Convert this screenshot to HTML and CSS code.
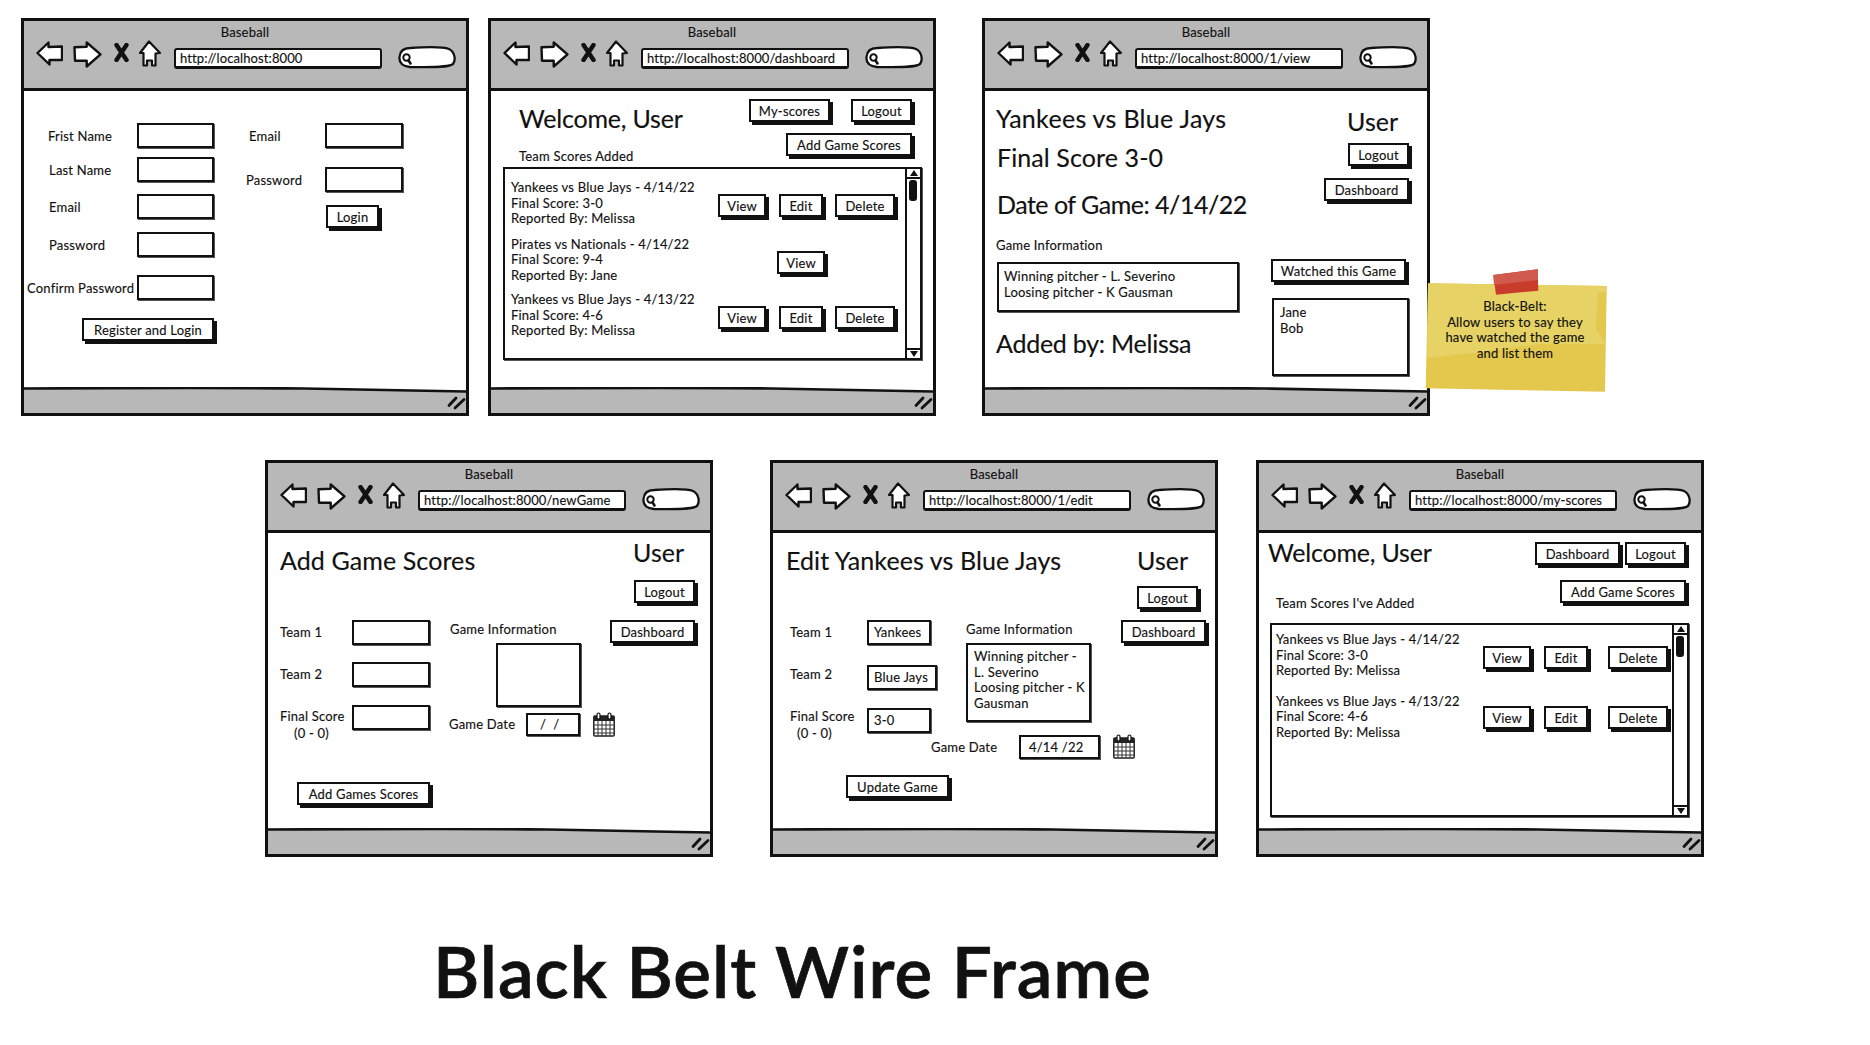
FILE: index.html
```html
<!DOCTYPE html>
<html lang="en">
<head>
<meta charset="utf-8">
<title>Black Belt Wire Frame</title>
<link rel="stylesheet" href="styles.css">
</head>
<body>
<svg class="defs" width="0" height="0" aria-hidden="true">
  <symbol id="i-back" viewBox="0 0 27 25"><path d="M1.5 12 12.5 1.5V6L26 5.5 26 19 13.5 19V23.5Z" fill="#fff" stroke="#111" stroke-width="2.4" stroke-linejoin="round"/></symbol>
  <symbol id="i-forward" viewBox="0 0 29 27"><path d="M1.5 6.3 13.7 5.7V1.5L27.5 13.3 13.7 25.5V19.7L2 19.7Z" fill="#fff" stroke="#111" stroke-width="2.4" stroke-linejoin="round"/></symbol>
  <symbol id="i-close" viewBox="0 0 15 19"><path d="M2.5 2 12.5 17M12.5 2 2.5 17" fill="none" stroke="#111" stroke-width="4.4" stroke-linecap="round"/></symbol>
  <symbol id="i-home" viewBox="0 0 22 27"><path d="M10 1.5 1 13 4.5 13V25.5H8V20.5H13V25.5H16.5V13.5L21 13Z" fill="#fff" stroke="#111" stroke-width="2.2" stroke-linejoin="round"/></symbol>
  <symbol id="i-search" viewBox="0 0 59 23"><path d="M12 2C28 1 46 1 51 3 57 6 58 14 55 18 50 22 30 21 12 21 3 20 1 16 1.500 11 2 5 6 2 12 2Z" fill="#fff" stroke="#111" stroke-width="2.300"/><circle cx="8.500" cy="11.500" r="3.200" fill="#fff" stroke="#111" stroke-width="2"/><path d="M10.500 14.500 12.500 17.500" stroke="#111" stroke-width="2.600" stroke-linecap="round"/></symbol>
  <symbol id="i-foot" viewBox="0 0 442 26"><path d="M0 1.500C90 1 200 .5 280 1.500 340 2.500 400 3.500 442 4.500V26H0Z" fill="#b8b8b8"/><path d="M0 1.500C90 1 200 .5 280 1.500 340 2.500 400 3.500 442 4.500" fill="none" stroke="#111" stroke-width="2.600"/><path d="M425 18.500 432 11M431 21 440 12.500" fill="none" stroke="#111" stroke-width="2.800" stroke-linecap="round"/></symbol>
  <symbol id="i-cal" viewBox="0 0 22 25"><rect x=".8" y="4" width="20.400" height="20" rx="1" fill="#fff" stroke="#222" stroke-width="1.500"/><rect x="1" y="4" width="20" height="5" fill="#222"/><path d="M1 13H21M1 17H21M1 21H21M5 9V24M9 9V24M13 9V24M17 9V24" fill="none" stroke="#333" stroke-width="1"/><rect x="4" y="1" width="3" height="6" rx="1.500" fill="#fff" stroke="#111" stroke-width="1.200"/><rect x="15" y="1" width="3" height="6" rx="1.500" fill="#fff" stroke="#111" stroke-width="1.200"/></symbol>
</svg>

<main class="canvas">

  <!-- 1. Register / login -->
  <section class="win win-1">
    <header class="chrome">
      <div class="chrome-title">Baseball</div>
      <div class="toolbar">
        <svg class="tb-back"><use href="#i-back"/></svg>
        <svg class="tb-forward"><use href="#i-forward"/></svg>
        <svg class="tb-close"><use href="#i-close"/></svg>
        <svg class="tb-home"><use href="#i-home"/></svg>
        <div class="url">http://localhost:8000</div>
        <svg class="tb-search"><use href="#i-search"/></svg>
      </div>
    </header>
    <div class="view cols">
      <div class="ml3 mt32 w187">
        <div class="row"><span class="lbl w110 pl21">Frist Name</span><span class="inp w77"></span></div>
        <div class="row mt9"><span class="lbl w110 pl22">Last Name</span><span class="inp w77"></span></div>
        <div class="row mt12"><span class="lbl w110 pl22">Email</span><span class="inp w77"></span></div>
        <div class="row mt13"><span class="lbl w110 pl22">Password</span><span class="inp w77"></span></div>
        <div class="row mt18"><span class="lbl w110">Confirm Password</span><span class="inp w77"></span></div>
        <div class="btn w132 mt18 ml55">Register and Login</div>
      </div>
      <div class="ml32 mt32">
        <div class="row"><span class="lbl w79 pl3">Email</span><span class="inp w78"></span></div>
        <div class="row mt19"><span class="lbl w79">Password</span><span class="inp w78"></span></div>
        <div class="btn w53 mt13 ml80">Login</div>
      </div>
    </div>
    <svg class="foot"><use href="#i-foot"/></svg>
  </section>

  <!-- 2. Dashboard -->
  <section class="win win-2">
    <header class="chrome">
      <div class="chrome-title">Baseball</div>
      <div class="toolbar">
        <svg class="tb-back"><use href="#i-back"/></svg>
        <svg class="tb-forward"><use href="#i-forward"/></svg>
        <svg class="tb-close"><use href="#i-close"/></svg>
        <svg class="tb-home"><use href="#i-home"/></svg>
        <div class="url">http://localhost:8000/dashboard</div>
        <svg class="tb-search"><use href="#i-search"/></svg>
      </div>
    </header>
    <div class="view">
      <div class="top h76">
        <div class="ml28">
          <h2 class="hd hd-tight mt13">Welcome, User</h2>
          <div class="lbl mt16">Team Scores Added</div>
        </div>
        <div class="actions mr21 mt8">
          <div class="row-auto gap21"><div class="btn w81">My-scores</div><div class="btn w61">Logout</div></div>
          <div class="btn w126 mt11">Add Game Scores</div>
        </div>
      </div>
      <div class="list ml12 h193">
        <div class="list-main pt11 pl6">
          <div class="item">
            <p class="item-text">Yankees vs Blue Jays - 4/14/22<br>Final Score: 3-0<br>Reported By: Melissa</p>
            <div class="item-btns mt14"><div class="btn w48">View</div><div class="btn w44 ml13">Edit</div><div class="btn w60 ml12">Delete</div></div>
          </div>
          <div class="item mt10">
            <p class="item-text">Pirates vs Nationals - 4/14/22<br>Final Score: 9-4<br>Reported By: Jane</p>
            <div class="item-btns mt14"><div class="btn w48 ml59">View</div></div>
          </div>
          <div class="item mt9">
            <p class="item-text">Yankees vs Blue Jays - 4/13/22<br>Final Score: 4-6<br>Reported By: Melissa</p>
            <div class="item-btns mt14"><div class="btn w48">View</div><div class="btn w44 ml13">Edit</div><div class="btn w60 ml12">Delete</div></div>
          </div>
        </div>
        <div class="scroll"><div class="sb-btn"><i class="tri-up"></i></div><div class="sb-track"><div class="sb-thumb"></div></div><div class="sb-btn sb-end"><i class="tri-down"></i></div></div>
      </div>
    </div>
    <svg class="foot"><use href="#i-foot"/></svg>
  </section>

  <!-- 3. View game -->
  <section class="win win-3">
    <header class="chrome">
      <div class="chrome-title">Baseball</div>
      <div class="toolbar">
        <svg class="tb-back"><use href="#i-back"/></svg>
        <svg class="tb-forward"><use href="#i-forward"/></svg>
        <svg class="tb-close"><use href="#i-close"/></svg>
        <svg class="tb-home"><use href="#i-home"/></svg>
        <div class="url">http://localhost:8000/1/view</div>
        <svg class="tb-search"><use href="#i-search"/></svg>
      </div>
    </header>
    <div class="view cols">
      <div class="ml11">
        <h2 class="hd hd-wide mt13">Yankees vs Blue Jays</h2>
        <div class="hd mt11 ml1">Final Score 3-0</div>
        <div class="hd hd-date mt19 ml1">Date of Game: 4/14/22</div>
        <div class="lbl mt19">Game Information</div>
        <div class="box w242 h50 mt9 ml1 pl5 pt5">Winning pitcher - L. Severino<br>Loosing pitcher - K Gausman</div>
        <div class="hd hd-narrow mt17">Added by: Melissa</div>
      </div>
      <div class="side w141 mr15">
        <div class="hd mt16 ml76">User</div>
        <div class="btn w61 mt8 self-end mr3">Logout</div>
        <div class="btn w85 mt12 self-end mr3">Dashboard</div>
        <div class="btn w135 mt58">Watched this Game</div>
        <div class="box w137 h78 mt16 ml1 pl6 pt5">Jane<br>Bob</div>
      </div>
    </div>
    <svg class="foot"><use href="#i-foot"/></svg>
  </section>

  <aside class="sticky">
    <svg class="sticky-art" viewBox="0 0 190 135" aria-hidden="true">
      <path d="M8 23.300 186.700 26 185 131.700 5.700 128.300Z" fill="#e4c84e"/>
      <path d="M8 23.300 186.700 26 186.500 32 178 33 176 70 186 84 120 84 60 92 7 98Z" fill="#e6d265"/>
      <path d="M73.300 15 117.700 9.300 118.300 30.700 76 34.700Z" fill="#c93b2a"/>
      <path d="M73.300 15 117.700 9.300 118 20 74 25Z" fill="#cf5a4d"/>
    </svg>
    <p class="sticky-text">Black-Belt:<br>Allow users to say they<br>have watched the game<br>and list them</p>
  </aside>

  <!-- 4. New game -->
  <section class="win win-low win-4">
    <header class="chrome">
      <div class="chrome-title">Baseball</div>
      <div class="toolbar">
        <svg class="tb-back"><use href="#i-back"/></svg>
        <svg class="tb-forward"><use href="#i-forward"/></svg>
        <svg class="tb-close"><use href="#i-close"/></svg>
        <svg class="tb-home"><use href="#i-home"/></svg>
        <div class="url">http://localhost:8000/newGame</div>
        <svg class="tb-search"><use href="#i-search"/></svg>
      </div>
    </header>
    <div class="view cols">
      <div class="ml12 w330">
        <h2 class="hd mt13">Add Game Scores</h2>
        <div class="cols mt46">
          <div class="w169">
            <div class="row-top"><span class="lbl w72 pt4">Team 1</span><span class="inp w78"></span></div>
            <div class="row-top mt17"><span class="lbl w72 pt4">Team 2</span><span class="inp w78"></span></div>
            <div class="row-top mt18"><span class="lbl w72 lh17 pt3">Final Score<span class="sub ml14">(0 - 0)</span></span><span class="inp w78"></span></div>
            <div class="btn w133 mt40 ml17">Add Games Scores</div>
          </div>
          <div>
            <div class="lbl mt1 ml1">Game Information</div>
            <div class="box w85 h64 mt6 ml47"></div>
            <div class="row-auto mt5">
              <span class="lbl lift2 w77">Game Date</span>
              <span class="inp date w54 pl12">/ &nbsp;/</span>
              <svg class="cal ml13"><use href="#i-cal"/></svg>
            </div>
          </div>
        </div>
      </div>
      <div class="side w88 mr12">
        <div class="hd mt5 ml23">User</div>
        <div class="btn w61 mt14 self-end mr3">Logout</div>
        <div class="btn w85 mt17">Dashboard</div>
      </div>
    </div>
    <svg class="foot"><use href="#i-foot"/></svg>
  </section>

  <!-- 5. Edit game -->
  <section class="win win-low win-5">
    <header class="chrome">
      <div class="chrome-title">Baseball</div>
      <div class="toolbar">
        <svg class="tb-back"><use href="#i-back"/></svg>
        <svg class="tb-forward"><use href="#i-forward"/></svg>
        <svg class="tb-close"><use href="#i-close"/></svg>
        <svg class="tb-home"><use href="#i-home"/></svg>
        <div class="url">http://localhost:8000/1/edit</div>
        <svg class="tb-search"><use href="#i-search"/></svg>
      </div>
    </header>
    <div class="view cols">
      <div class="ml13 w335">
        <h2 class="hd mt13">Edit Yankees vs Blue Jays</h2>
        <div class="cols mt46 ml4">
          <div class="w176">
            <div class="row-top"><span class="lbl w77 pt4">Team 1</span><span class="inp w64 val">Yankees</span></div>
            <div class="row-top mt20"><span class="lbl w77 pt1">Team 2</span><span class="inp w70 val">Blue Jays</span></div>
            <div class="row-top mt18"><span class="lbl w77 lh17">Final Score<span class="sub ml7">(0 - 0)</span></span><span class="inp w64 val">3-0</span></div>
            <div class="btn w103 mt33 ml56">Update Game</div>
          </div>
          <div>
            <div class="lbl mt1">Game Information</div>
            <div class="box w125 h79 mt6 pl6 pt4">Winning pitcher -<br>L. Severino<br>Loosing pitcher - K<br>Gausman</div>
            <div class="row-auto mt12 mln35">
              <span class="lbl w88">Game Date</span>
              <span class="inp date2 w81 pl8">4/14 /22</span>
              <svg class="cal ml13"><use href="#i-cal"/></svg>
            </div>
          </div>
        </div>
      </div>
      <div class="side w88 mr6">
        <div class="hd mt13 ml16">User</div>
        <div class="btn w61 mt12 ml16">Logout</div>
        <div class="btn w85 mt11">Dashboard</div>
      </div>
    </div>
    <svg class="foot"><use href="#i-foot"/></svg>
  </section>

  <!-- 6. My scores -->
  <section class="win win-low win-6">
    <header class="chrome">
      <div class="chrome-title">Baseball</div>
      <div class="toolbar">
        <svg class="tb-back"><use href="#i-back"/></svg>
        <svg class="tb-forward"><use href="#i-forward"/></svg>
        <svg class="tb-close"><use href="#i-close"/></svg>
        <svg class="tb-home"><use href="#i-home"/></svg>
        <div class="url">http://localhost:8000/my-scores</div>
        <svg class="tb-search"><use href="#i-search"/></svg>
      </div>
    </header>
    <div class="view">
      <div class="top h90">
        <div class="ml9">
          <h2 class="hd hd-tight mt5">Welcome, User</h2>
          <div class="lbl mt29 ml8">Team Scores I've Added</div>
        </div>
        <div class="actions mr15 mt9">
          <div class="row-auto gap5"><div class="btn w85">Dashboard</div><div class="btn w61">Logout</div></div>
          <div class="btn w126 mt15">Add Game Scores</div>
        </div>
      </div>
      <div class="list ml11 h194">
        <div class="list-main pt7 pl4">
          <div class="item">
            <p class="item-text">Yankees vs Blue Jays - 4/14/22<br>Final Score: 3-0<br>Reported By: Melissa</p>
            <div class="item-btns mt14"><div class="btn w48">View</div><div class="btn w44 ml13">Edit</div><div class="btn w60 ml20">Delete</div></div>
          </div>
          <div class="item mt15">
            <p class="item-text">Yankees vs Blue Jays - 4/13/22<br>Final Score: 4-6<br>Reported By: Melissa</p>
            <div class="item-btns mt12"><div class="btn w48">View</div><div class="btn w44 ml13">Edit</div><div class="btn w60 ml20">Delete</div></div>
          </div>
        </div>
        <div class="scroll"><div class="sb-btn"><i class="tri-up"></i></div><div class="sb-track"><div class="sb-thumb"></div></div><div class="sb-btn sb-end"><i class="tri-down"></i></div></div>
      </div>
    </div>
    <svg class="foot"><use href="#i-foot"/></svg>
  </section>

  <h1 class="page-title">Black Belt Wire Frame</h1>
</main>
</body>
</html>
```

FILE: styles.css
```css
* { box-sizing: border-box; }
html, body { margin: 0; padding: 0; background: #fff; }
body { font-family: Lato, "Noto Sans", sans-serif; font-size: 13px; letter-spacing: .2px; -webkit-text-stroke: .15px #111; color: #111; }
.defs { position: absolute; }
.canvas { position: relative; width: 1870px; height: 1045px; overflow: hidden; }

/* free-canvas windows */
.win { position: absolute; top: 18px; width: 448px; height: 398px; display: flex; flex-direction: column; border: 3px solid #111; background: #fff; }
.win-low { top: 460px; height: 397px; }
.win-1 { left: 21px; }
.win-2 { left: 488px; }
.win-3 { left: 982px; }
.win-4 { left: 265px; }
.win-5 { left: 770px; }
.win-6 { left: 1256px; }

/* browser chrome */
.chrome { flex: none; height: 70px; background: #b8b8b8; border-bottom: 3px solid #111; padding-top: 3px; }
.chrome-title { height: 16px; line-height: 16px; text-align: center; }
.toolbar { display: flex; align-items: flex-start; padding-left: 12px; margin-top: 1px; }
.tb-back { width: 27px; height: 25px; flex: none; }
.tb-forward { width: 29px; height: 27px; flex: none; margin-left: 10px; }
.tb-close { width: 15px; height: 19px; flex: none; margin: 2px 0 0 12px; }
.tb-home { width: 22px; height: 27px; flex: none; margin: -1px 0 0 10px; }
.url { width: 208px; height: 21px; flex: none; margin: 7px 0 0 13px; padding-left: 4px; line-height: 17px; letter-spacing: .1px; background: #fff; border: 2px solid #111; border-bottom-width: 3px; border-radius: 3px; white-space: nowrap; overflow: hidden; }
.tb-search { width: 59px; height: 23px; flex: none; margin: 5px 0 0 16px; }
.foot { flex: none; display: block; width: 442px; height: 26px; }
.view { flex: 1; min-height: 0; }

/* layout helpers */
.cols { display: flex; align-items: flex-start; }
.cols > * { flex: none; }
.top { display: flex; justify-content: space-between; align-items: flex-start; }
.actions { display: flex; flex-direction: column; align-items: flex-end; }
.cols > .side { margin-left: auto; display: flex; flex-direction: column; align-items: flex-start; }
.self-end { align-self: flex-end; }
.row { display: flex; align-items: center; height: 25px; }
.row-top { display: flex; align-items: flex-start; }
.row-auto { display: flex; align-items: center; }
.gap21 { gap: 21px; }
.gap5 { gap: 5px; }

/* text */
.hd { margin-bottom: 0; font-size: 25px; line-height: 28px; font-weight: 400; letter-spacing: .1px; white-space: nowrap; }
.hd-tight { letter-spacing: -.2px; }
.hd-wide { letter-spacing: .3px; }
.hd-narrow { letter-spacing: -.25px; }
.hd-date { letter-spacing: -.5px; }
h2.hd { margin-left: 0; margin-right: 0; }
.lbl { display: block; flex: none; line-height: 16px; white-space: nowrap; }
.lh17 { line-height: 17px; }
.lift2 { margin-top: -2px; }
.sub { display: block; }

/* controls */
.inp { display: block; flex: none; height: 25px; background: #fff; border: 2px solid #111; box-shadow: 1px 1px 0 #555; }
.val { padding-left: 5px; line-height: 21px; white-space: nowrap; }
.date { height: 23px; line-height: 19px; }
.date2 { height: 24px; line-height: 20px; }
.btn { flex: none; height: 23px; line-height: 21px; text-align: center; background: #fff; border: 2px solid #111; box-shadow: 3px 3px 0 #111; white-space: nowrap; }
.box { background: #fff; border: 2px solid #111; box-shadow: 1px 1px 0 #555; line-height: 15.5px; white-space: nowrap; }
.cal { flex: none; width: 22px; height: 25px; }

/* score lists */
.list { display: flex; width: 419px; background: #fff; border: 2px solid #111; box-shadow: 1px 1px 0 #555; }
.list-main { flex: 1; min-width: 0; }
.item { display: flex; align-items: flex-start; }
.item-text { flex: none; width: 207px; margin: 0; line-height: 15.5px; white-space: nowrap; }
.item-btns { display: flex; }
.scroll { flex: none; width: 15px; display: flex; flex-direction: column; border-left: 2px solid #111; }
.sb-btn { flex: none; height: 10px; display: flex; align-items: center; justify-content: center; border-bottom: 2px solid #111; }
.sb-end { border-bottom: 0; border-top: 2px solid #111; }
.sb-track { flex: 1; padding: 1px 0 0 2px; }
.sb-thumb { width: 8px; height: 21px; background: #111; border-radius: 3px; }
.tri-up { width: 0; height: 0; border: 4px solid transparent; border-top-width: 0; border-bottom: 6px solid #111; }
.tri-down { width: 0; height: 0; border: 4px solid transparent; border-bottom-width: 0; border-top: 6px solid #111; }

/* sticky note */
.sticky { position: absolute; left: 1420px; top: 260px; width: 190px; height: 135px; padding-top: 39px; }
.sticky-art { position: absolute; left: 0; top: 0; width: 190px; height: 135px; }
.sticky-text { position: relative; margin: 0; text-align: center; line-height: 15.5px; }

/* page title */
.page-title { position: absolute; left: 433px; top: 928px; margin: 0; font-size: 71px; line-height: 86px; font-weight: 600; letter-spacing: 1px; -webkit-text-stroke: .7px #111; white-space: nowrap; }

/* spacing + sizing */
.mt1{margin-top:1px}.mt5{margin-top:5px}.mt6{margin-top:6px}.mt8{margin-top:8px}.mt9{margin-top:9px}.mt10{margin-top:10px}.mt11{margin-top:11px}.mt12{margin-top:12px}.mt13{margin-top:13px}.mt14{margin-top:14px}.mt15{margin-top:15px}.mt16{margin-top:16px}.mt17{margin-top:17px}.mt18{margin-top:18px}.mt19{margin-top:19px}.mt20{margin-top:20px}.mt29{margin-top:29px}.mt32{margin-top:32px}.mt33{margin-top:33px}.mt40{margin-top:40px}.mt46{margin-top:46px}.mt58{margin-top:58px}
.ml1{margin-left:1px}.ml3{margin-left:3px}.ml4{margin-left:4px}.ml7{margin-left:7px}.ml8{margin-left:8px}.ml9{margin-left:9px}.ml11{margin-left:11px}.ml12{margin-left:12px}.ml13{margin-left:13px}.ml14{margin-left:14px}.ml16{margin-left:16px}.ml17{margin-left:17px}.ml20{margin-left:20px}.ml23{margin-left:23px}.ml28{margin-left:28px}.ml32{margin-left:32px}.ml47{margin-left:47px}.ml55{margin-left:55px}.ml56{margin-left:56px}.ml59{margin-left:59px}.ml76{margin-left:76px}.ml80{margin-left:80px}.mln35{margin-left:-35px}
.mr3{margin-right:3px}.mr6{margin-right:6px}.mr12{margin-right:12px}.mr15{margin-right:15px}.mr21{margin-right:21px}
.pl3{padding-left:3px}.pl4{padding-left:4px}.pl5{padding-left:5px}.pl6{padding-left:6px}.pl8{padding-left:8px}.pl12{padding-left:12px}.pl21{padding-left:21px}.pl22{padding-left:22px}
.pt1{padding-top:1px}.pt3{padding-top:3px}.pt4{padding-top:4px}.pt5{padding-top:5px}.pt7{padding-top:7px}.pt11{padding-top:11px}
.w44{width:44px}.w48{width:48px}.w53{width:53px}.w54{width:54px}.w60{width:60px}.w61{width:61px}.w64{width:64px}.w70{width:70px}.w72{width:72px}.w77{width:77px}.w78{width:78px}.w79{width:79px}.w81{width:81px}.w85{width:85px}.w88{width:88px}.w103{width:103px}.w110{width:110px}.w125{width:125px}.w126{width:126px}.w132{width:132px}.w133{width:133px}.w135{width:135px}.w137{width:137px}.w141{width:141px}.w169{width:169px}.w176{width:176px}.w187{width:187px}.w242{width:242px}.w330{width:330px}.w335{width:335px}
.h50{height:50px}.h64{height:64px}.h76{height:76px}.h78{height:78px}.h79{height:79px}.h90{height:90px}.h193{height:193px}.h194{height:194px}
```
